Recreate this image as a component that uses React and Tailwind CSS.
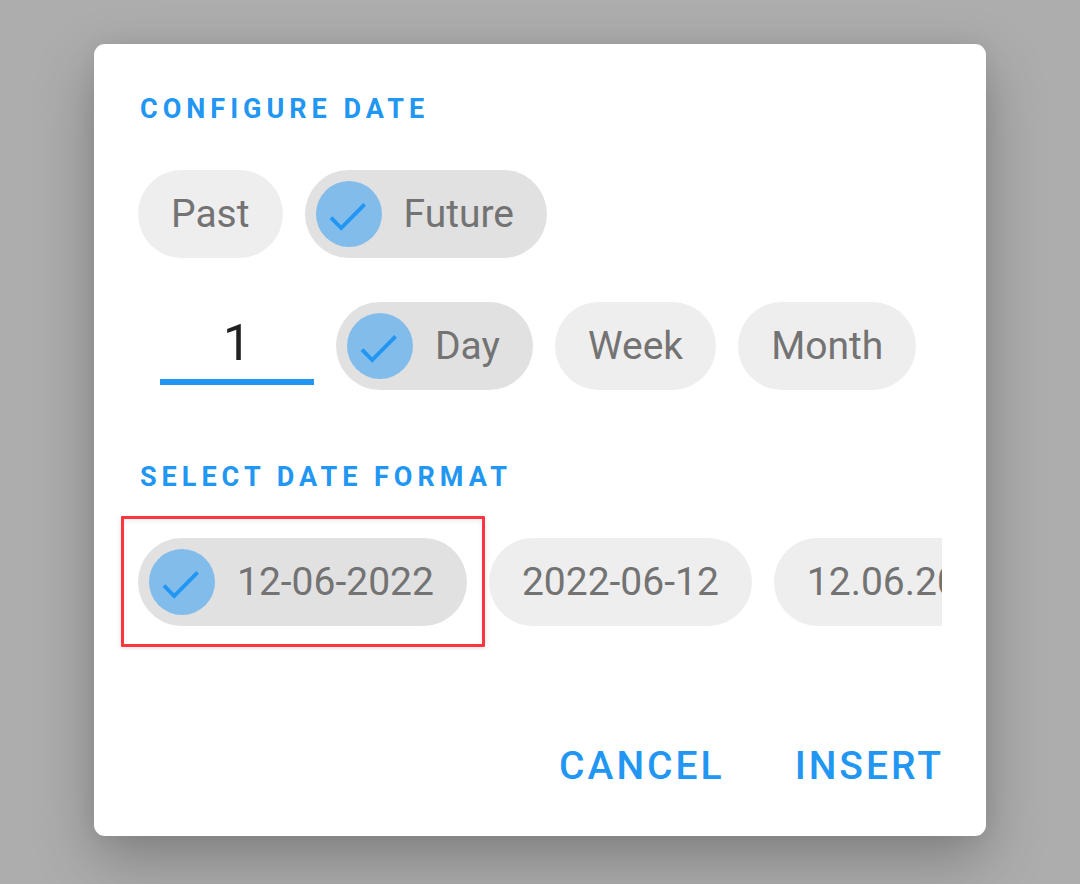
import { useState } from "react";

function CheckBadge() {
  return (
    <span className="flex size-[66px] shrink-0 items-center justify-center rounded-full bg-[#82bceb]">
      <svg viewBox="0 0 66 66" className="size-[66px]" fill="none" aria-hidden="true">
        <path d="M15 36.7 L25.2 47 L48.6 23.3" stroke="#2196f3" strokeWidth="3.9" />
      </svg>
    </span>
  );
}

function Chip({ name, label, checked, onSelect, highlighted }) {
  return (
    <label
      className={
        "relative flex h-[88px] shrink-0 cursor-pointer items-center rounded-full pr-[33px] text-[39px] leading-[44px] whitespace-nowrap text-[#737373] " +
        (checked ? "gap-[22px] bg-[#e1e1e1] pl-[11px]" : "bg-[#eeeeee] pl-[33px]")
      }
    >
      <input type="radio" name={name} checked={checked} onChange={onSelect} className="sr-only" />
      {checked && <CheckBadge />}
      <span>{label}</span>
      {highlighted && (
        <span className="pointer-events-none absolute -top-[22px] -right-[18px] -bottom-[21px] -left-[17px] rounded-[1px] border-3 border-[#fb3640] shadow-[0_2px_6px_rgba(0,0,0,0.1),inset_0_2px_5px_rgba(0,0,0,0.07)]" />
      )}
    </label>
  );
}

function SectionTitle({ children }) {
  return (
    <h2 className="pl-0.5 text-[27px] leading-[46px] font-bold tracking-[5px] text-[#2196f3] uppercase">{children}</h2>
  );
}

export default function App() {
  const [direction, setDirection] = useState("Future");
  const [unit, setUnit] = useState("Day");
  const [format, setFormat] = useState("12-06-2022");
  const [amount, setAmount] = useState("1");

  return (
    <main className="flex min-h-screen items-start justify-center bg-[#adadad] px-6 pt-11 pb-12 font-['Roboto',sans-serif]">
      <form
        role="dialog"
        aria-label="Configure date"
        onSubmit={(e) => e.preventDefault()}
        className="w-full max-w-[892px] rounded-[11px] bg-white px-11 pt-[42px] pb-12 shadow-[0_24px_60px_rgba(0,0,0,0.26),0_0_20px_rgba(0,0,0,0.06)]"
      >
        <SectionTitle>Configure date</SectionTitle>
        <div className="mt-[38px] flex flex-wrap gap-[22px]">
          {["Past", "Future"].map((v) => (
            <Chip key={v} name="direction" label={v} checked={direction === v} onSelect={() => setDirection(v)} />
          ))}
        </div>
        <div className="mt-11 flex flex-wrap gap-[22px] pl-[22px]">
          <input
            aria-label="Amount"
            type="text"
            inputMode="numeric"
            value={amount}
            onChange={(e) => setAmount(e.target.value)}
            className="mb-[5px] h-[83px] w-[154px] border-b-6 border-[#2196f3] bg-transparent pt-1 text-center text-[50px] text-[#212121] outline-none"
          />
          {["Day", "Week", "Month"].map((v) => (
            <Chip key={v} name="unit" label={v} checked={unit === v} onSelect={() => setUnit(v)} />
          ))}
        </div>
        <div className="mt-16">
          <SectionTitle>Select date format</SectionTitle>
        </div>
        <div className="mt-3.5 -mb-6 -ml-6 flex gap-[22px] overflow-x-auto py-6 pl-6 [scrollbar-width:none]">
          {["12-06-2022", "2022-06-12", "12.06.2022"].map((v, i) => (
            <Chip
              key={v}
              name="format"
              label={v}
              checked={format === v}
              onSelect={() => setFormat(v)}
              highlighted={i === 0}
            />
          ))}
        </div>
        <div className="-mr-0.5 mt-[118px] flex justify-end gap-[70px] text-[39px] leading-[44px] font-medium tracking-[3px] text-[#2196f3]">
          <button type="button" className="cursor-pointer">CANCEL</button>
          <button type="submit" className="cursor-pointer">INSERT</button>
        </div>
      </form>
    </main>
  );
}
